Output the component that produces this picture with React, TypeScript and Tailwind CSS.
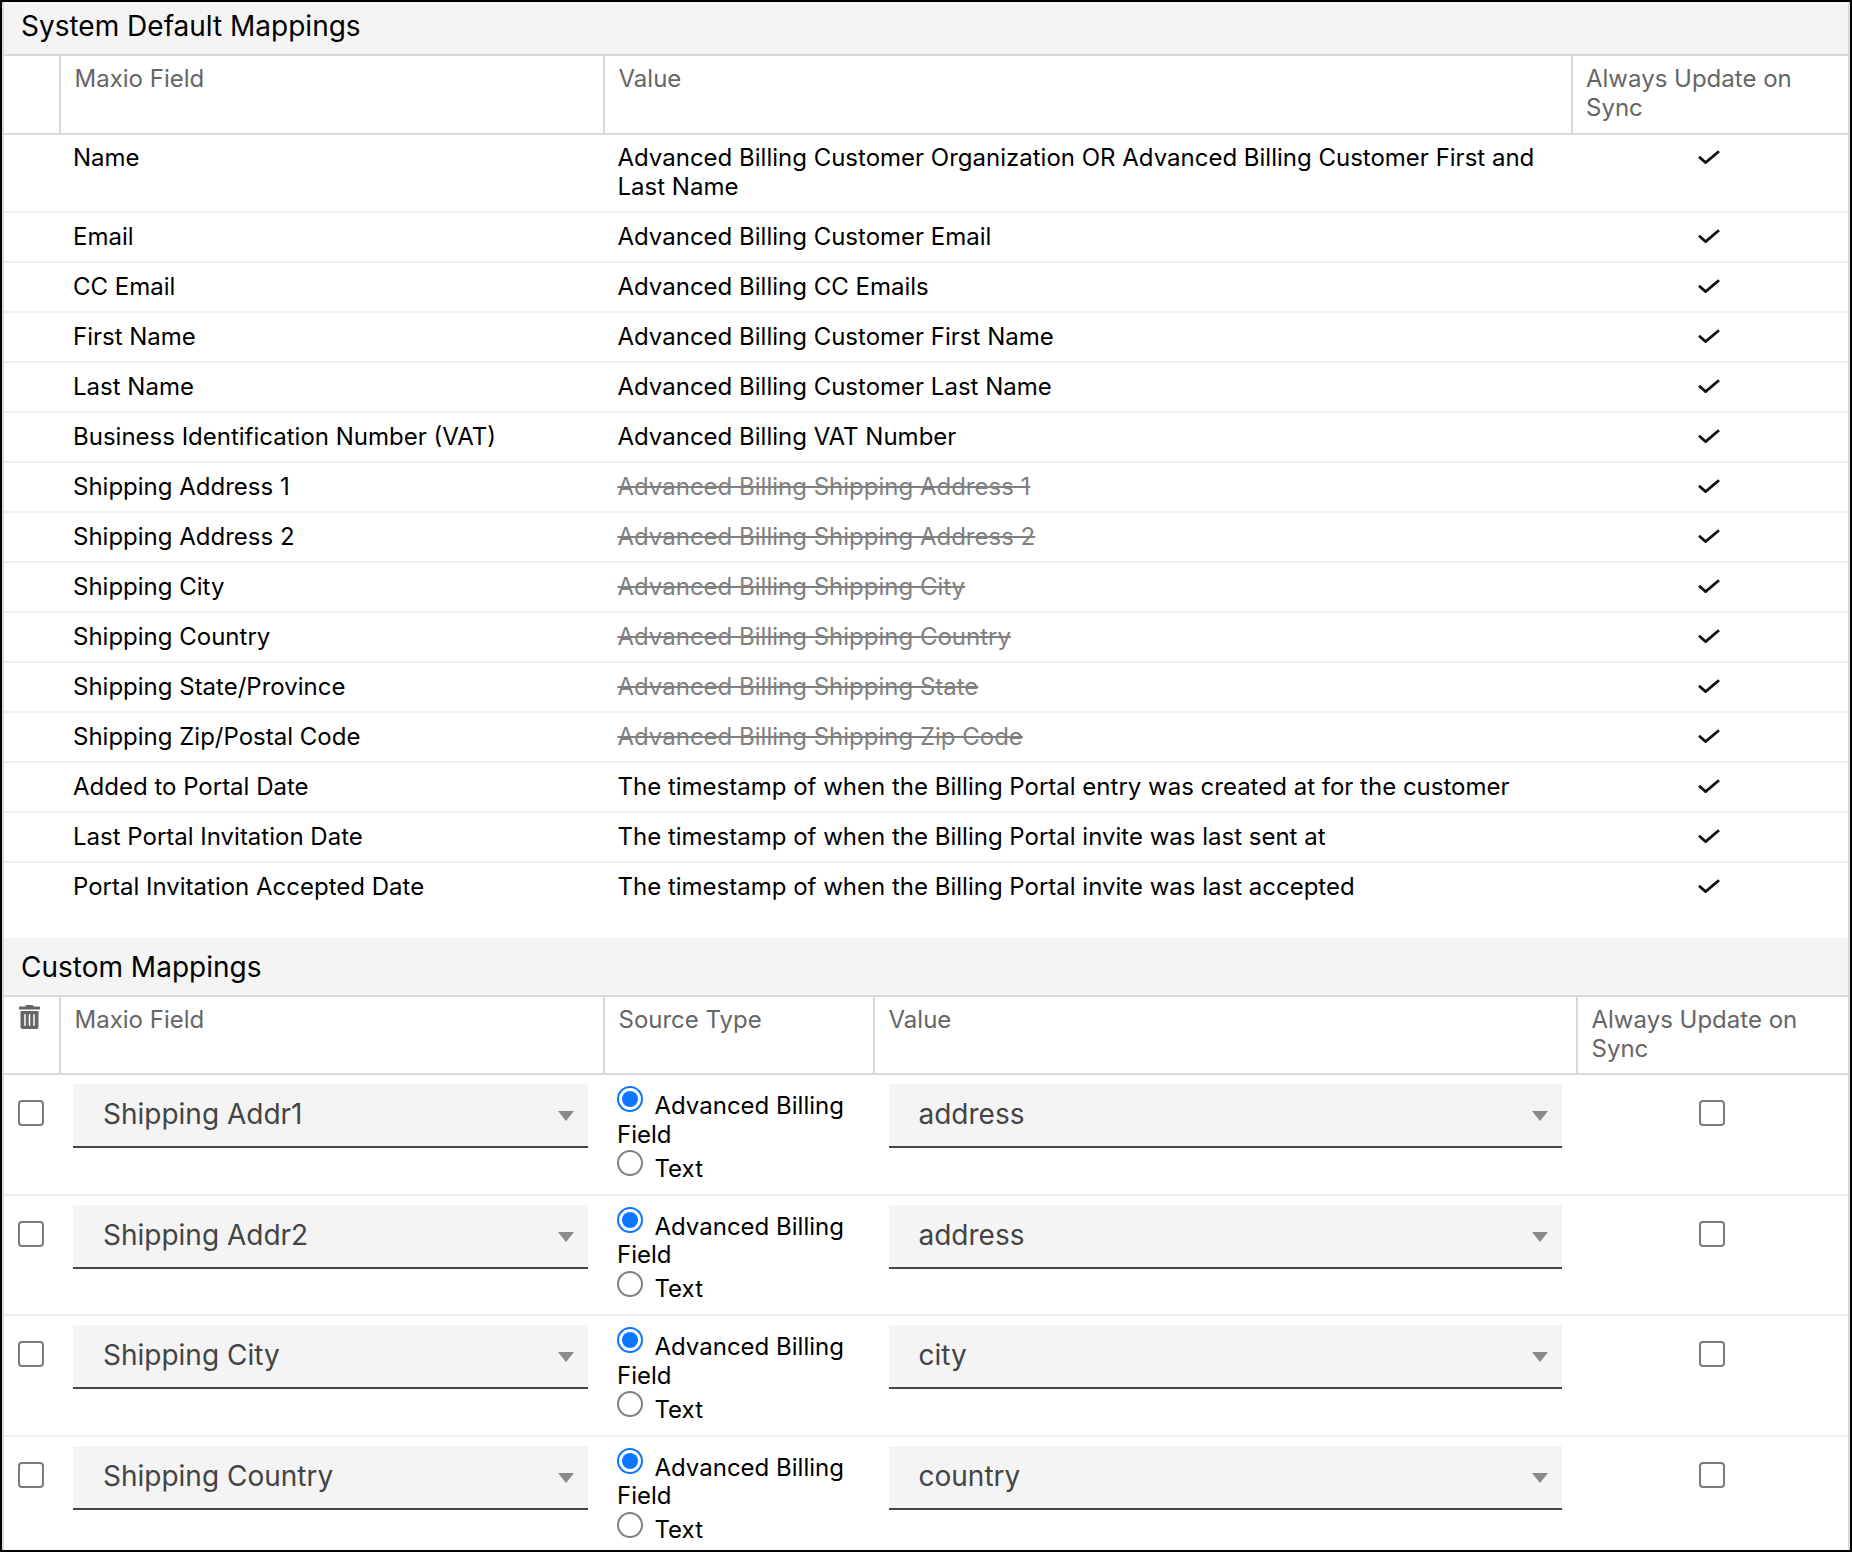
import { FaTrashAlt } from "react-icons/fa";

const defaults = [
  { field: "Name", value: "Advanced Billing Customer Organization OR Advanced Billing Customer First and Last Name" },
  { field: "Email", value: "Advanced Billing Customer Email" },
  { field: "CC Email", value: "Advanced Billing CC Emails" },
  { field: "First Name", value: "Advanced Billing Customer First Name" },
  { field: "Last Name", value: "Advanced Billing Customer Last Name" },
  { field: "Business Identification Number (VAT)", value: "Advanced Billing VAT Number" },
  { field: "Shipping Address 1", value: "Advanced Billing Shipping Address 1", old: true },
  { field: "Shipping Address 2", value: "Advanced Billing Shipping Address 2", old: true },
  { field: "Shipping City", value: "Advanced Billing Shipping City", old: true },
  { field: "Shipping Country", value: "Advanced Billing Shipping Country", old: true },
  { field: "Shipping State/Province", value: "Advanced Billing Shipping State", old: true },
  { field: "Shipping Zip/Postal Code", value: "Advanced Billing Shipping Zip Code", old: true },
  { field: "Added to Portal Date", value: "The timestamp of when the Billing Portal entry was created at for the customer" },
  { field: "Last Portal Invitation Date", value: "The timestamp of when the Billing Portal invite was last sent at" },
  { field: "Portal Invitation Accepted Date", value: "The timestamp of when the Billing Portal invite was last accepted" },
];

const customs = [
  { field: "Shipping Addr1", value: "address" },
  { field: "Shipping Addr2", value: "address" },
  { field: "Shipping City", value: "city" },
  { field: "Shipping Country", value: "country" },
];

function SectionTitle({ children, tall }: { children: React.ReactNode; tall?: boolean }) {
  return (
    <div
      className={`bg-[#f4f4f4] border-b-2 border-[#d9d9d9] pl-[17px] text-[28px] leading-[36px] text-black ${
        tall ? "h-[58.5px] pt-[10.5px]" : "h-[54px] pt-[6px]"
      }`}
    >
      {children}
    </div>
  );
}

function HeadCell({ children, pad = "pl-[13.5px]" }: { children?: React.ReactNode; pad?: string }) {
  return (
    <th className={`border-r-2 last:border-r-0 border-b-2 border-[#d9d9d9] align-top h-[78.5px] pt-[8px] ${pad} pr-[10px] text-left font-normal text-[#666]`}>
      {children}
    </th>
  );
}

function Check() {
  return (
    <svg viewBox="0 0 22 14" className="w-[22px] h-[14px] mx-auto" fill="none" stroke="#111" strokeWidth="2.8">
      <path d="M1 6.8 L7.6 12.6 L21 1.2" />
    </svg>
  );
}

function Select({ label }: { label: string }) {
  return (
    <div className="relative h-[64px] bg-[#f4f4f4] border-b-2 border-[#444] pl-[30px] pt-[12px] text-[28px] leading-[36px] text-[#444]">
      {label}
      <span className="absolute right-[14px] top-[27px] w-0 h-0 border-x-[8px] border-x-transparent border-t-[10px] border-t-[#8a8a8a]" />
    </div>
  );
}

function Radio({ on }: { on?: boolean }) {
  return on ? (
    <span className="inline-block w-[26px] h-[26px] -mt-[4px] p-[3px] rounded-full border-[2.5px] border-[#0a75ff] align-[1.5px] mr-[11.5px]">
      <span className="block w-full h-full rounded-full bg-[#0a75ff]" />
    </span>
  ) : (
    <span className="inline-block w-[26px] h-[26px] -mt-[4px] rounded-full border-[2px] border-[#808080] bg-white align-[0.5px] mr-[11.5px]" />
  );
}

function Box() {
  return <span className="block w-[26px] h-[26px] rounded-[4px] border-2 border-[#7b7b7b] bg-white" />;
}

export default function App() {
  return (
    <div className="w-[1852px] h-[1552px] overflow-hidden bg-white border-2 border-black font-['Inter',sans-serif] text-[24px] leading-[29px] text-black">
      <div className="h-full border-x-2 border-[#d9d9d9]">
        <SectionTitle>System Default Mappings</SectionTitle>
        <table className="w-full table-fixed border-separate border-spacing-0">
          <colgroup>
            <col className="w-[57px]" />
            <col className="w-[544px]" />
            <col className="w-[967.5px]" />
            <col />
          </colgroup>
          <thead>
            <tr>
              <HeadCell />
              <HeadCell>Maxio Field</HeadCell>
              <HeadCell>Value</HeadCell>
              <HeadCell>Always Update on Sync</HeadCell>
            </tr>
          </thead>
          <tbody>
            {defaults.map((row, i) => {
              const line = i < defaults.length - 1 ? "border-b-2 border-[#efefef]" : "";
              return (
                <tr key={row.field}>
                  <td className={`h-[50px] ${line}`} />
                  <td className={`${line} align-top pt-[8.5px] pl-[12px]`}>{row.field}</td>
                  <td className={`${line} align-top pt-[8.5px] pb-[10px] pl-[12.5px] pr-[20px] ${row.old ? "line-through text-[#808080]" : ""}`}>
                    {row.value}
                  </td>
                  <td className={`${line} align-top pt-[15.5px] pr-[2px]`}>
                    <Check />
                  </td>
                </tr>
              );
            })}
          </tbody>
        </table>

        <div className="h-[25px]" />
        <SectionTitle tall>Custom Mappings</SectionTitle>
        <table className="w-full table-fixed border-separate border-spacing-0">
          <colgroup>
            <col className="w-[57px]" />
            <col className="w-[544px]" />
            <col className="w-[270px]" />
            <col className="w-[703px]" />
            <col />
          </colgroup>
          <thead>
            <tr>
              <HeadCell pad="pl-[15px]">
                <FaTrashAlt className="w-[21px] h-[24px] text-[#666]" />
              </HeadCell>
              <HeadCell>Maxio Field</HeadCell>
              <HeadCell>Source Type</HeadCell>
              <HeadCell>Value</HeadCell>
              <HeadCell>Always Update on Sync</HeadCell>
            </tr>
          </thead>
          <tbody>
            {customs.map((row) => (
              <tr key={row.field}>
                <td className="h-[120.6px] border-b-2 border-[#efefef] align-top pt-[25px] pl-[13.5px]">
                  <Box />
                </td>
                <td className="border-b-2 border-[#efefef] align-top pt-[9px] pl-[12px] pr-[17px]">
                  <Select label={row.field} />
                </td>
                <td className="border-b-2 border-[#efefef] align-top pt-[15px] pl-[12px] pr-[10px]">
                  <div>
                    <Radio on />
                    Advanced Billing Field
                  </div>
                  <div className="mt-[5px]">
                    <Radio />
                    Text
                  </div>
                </td>
                <td className="border-b-2 border-[#efefef] align-top pt-[9px] pl-[13.5px] pr-[16px]">
                  <Select label={row.value} />
                </td>
                <td className="border-b-2 border-[#efefef] align-top pt-[25px] pl-[121px]">
                  <Box />
                </td>
              </tr>
            ))}
          </tbody>
        </table>
      </div>
    </div>
  );
}
